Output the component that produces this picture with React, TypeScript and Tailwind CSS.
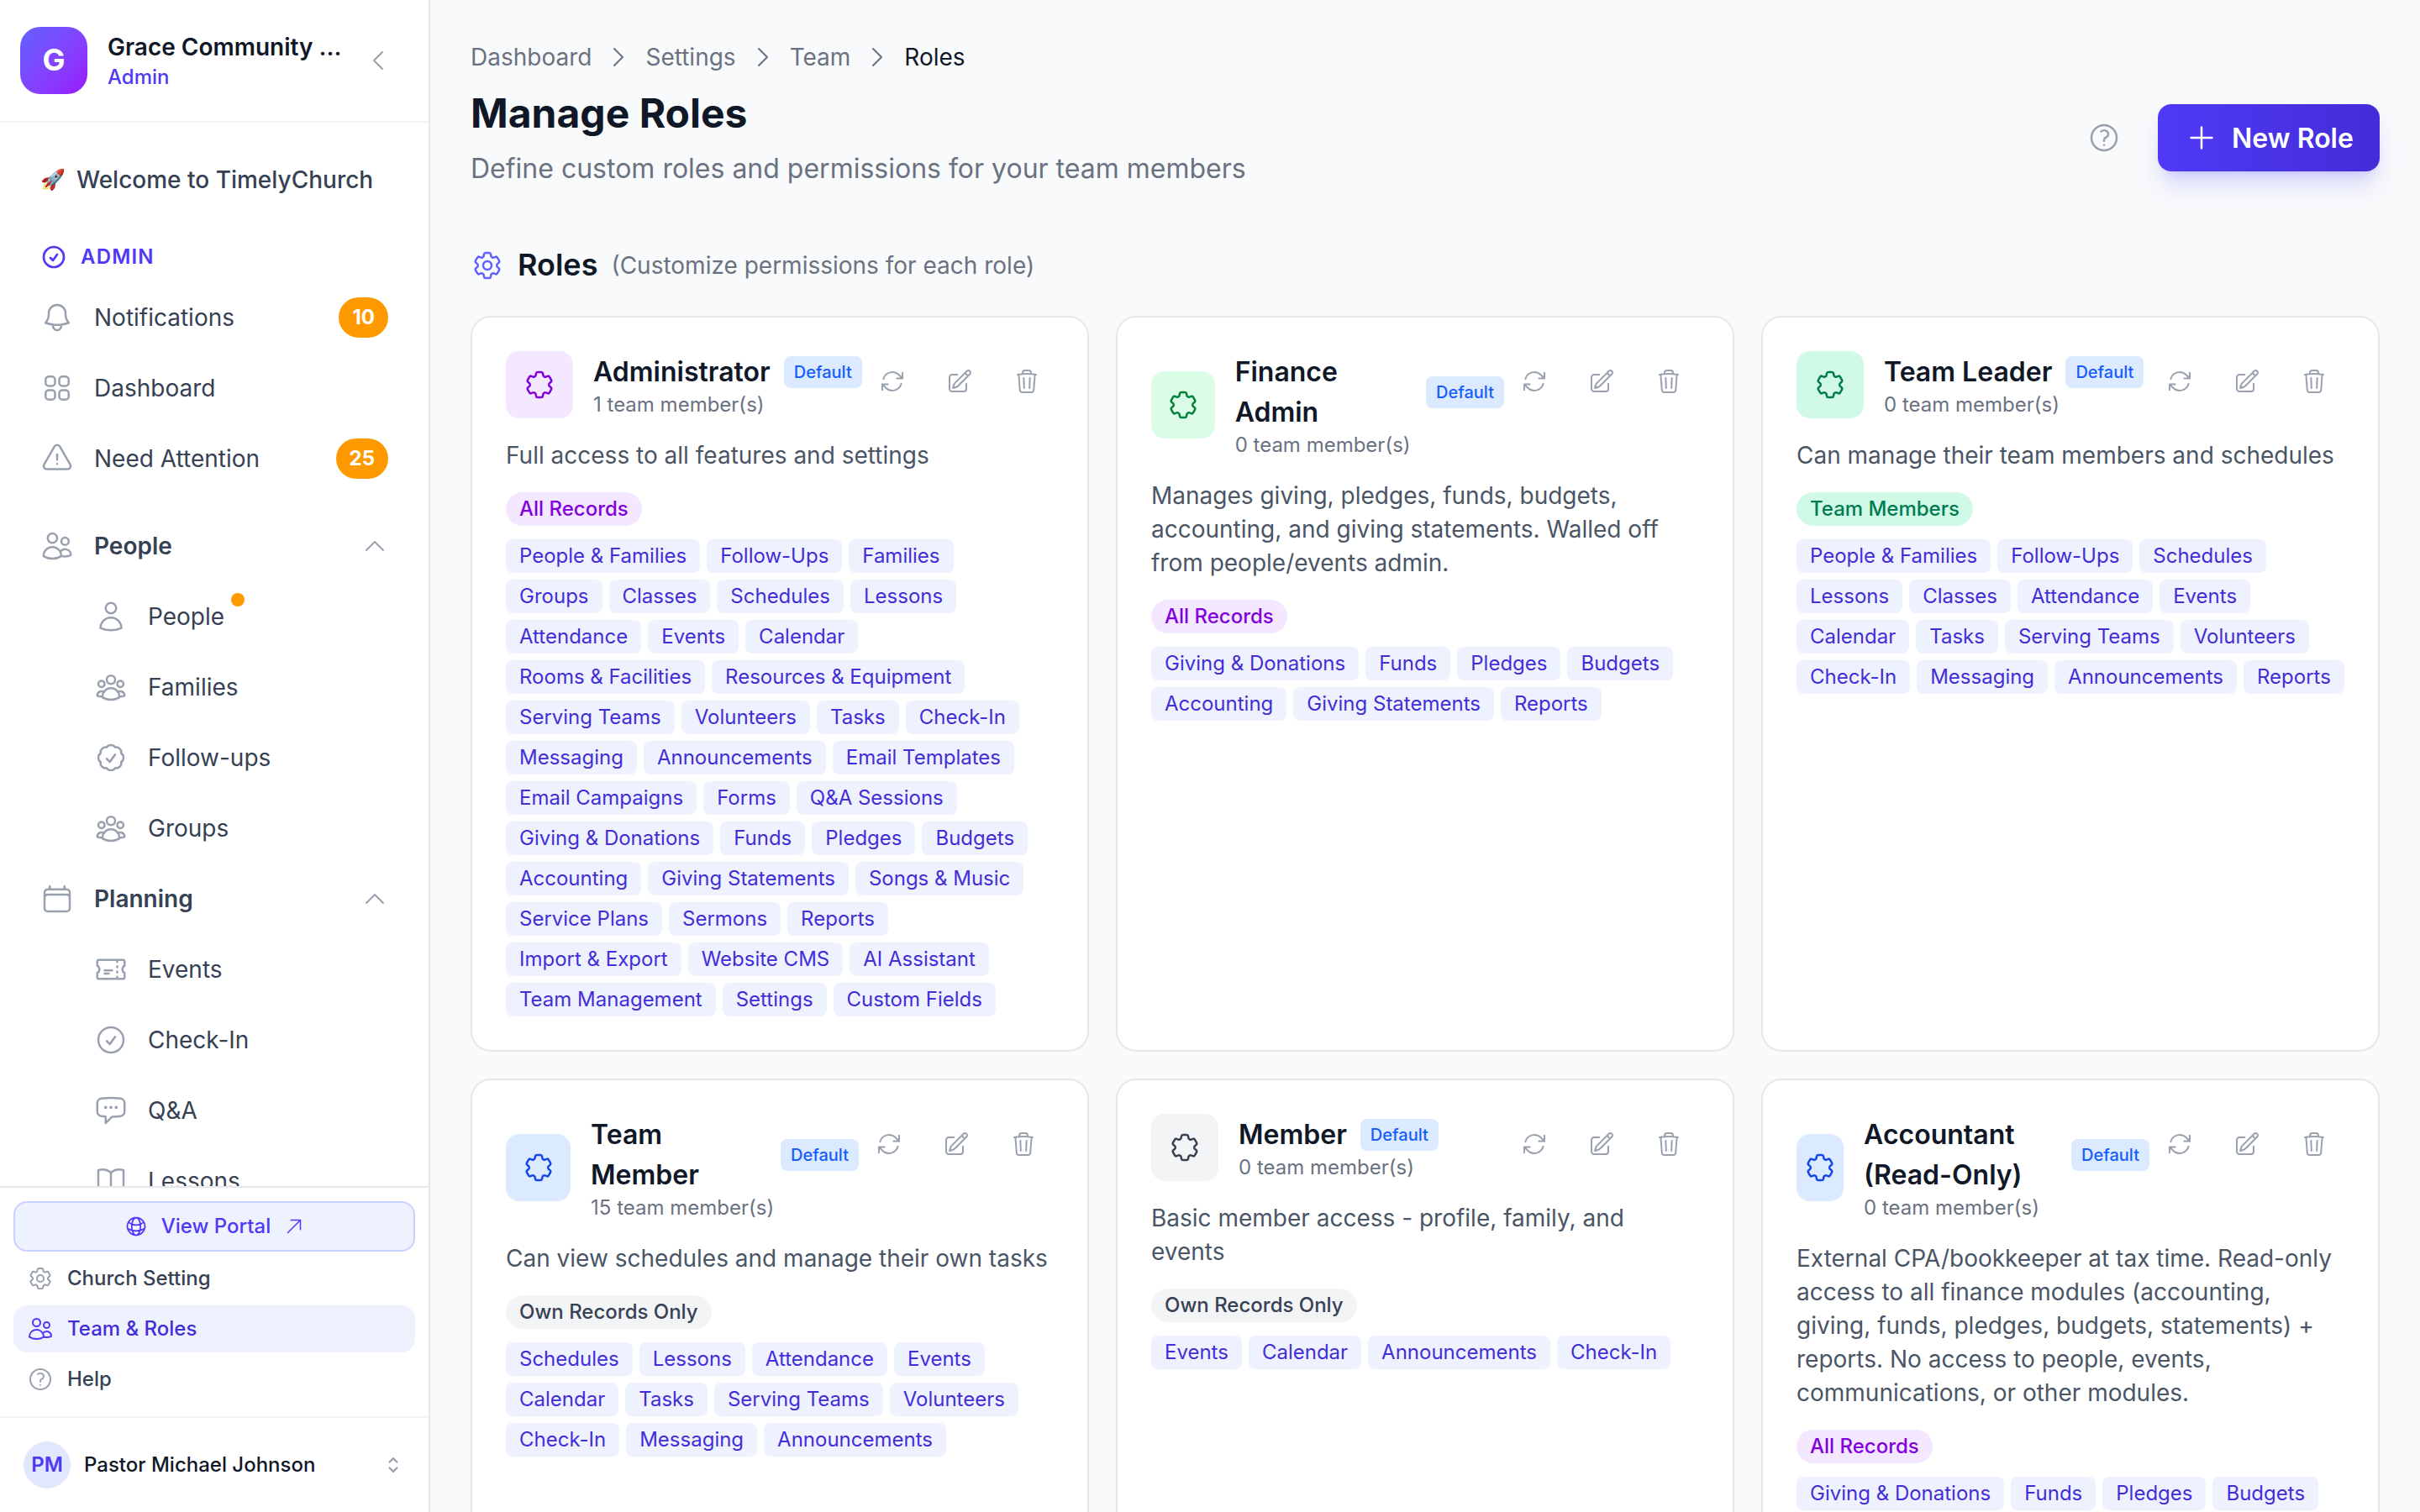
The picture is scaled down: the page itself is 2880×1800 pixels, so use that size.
import React from 'react';
import {
  HiOutlineArrowPath,
  HiOutlineArrowUpRight,
  HiOutlineBell,
  HiOutlineBookOpen,
  HiOutlineCalendar,
  HiOutlineChatBubbleLeftEllipsis,
  HiOutlineCheckBadge,
  HiOutlineCheckCircle,
  HiOutlineChevronLeft,
  HiOutlineChevronRight,
  HiOutlineChevronUp,
  HiOutlineChevronUpDown,
  HiOutlineCog6Tooth,
  HiOutlineExclamationTriangle,
  HiOutlineGlobeAlt,
  HiOutlinePencilSquare,
  HiOutlinePlus,
  HiOutlineQuestionMarkCircle,
  HiOutlineSquares2X2,
  HiOutlineTicket,
  HiOutlineTrash,
  HiOutlineUser,
  HiOutlineUserGroup,
  HiOutlineUsers,
} from 'react-icons/hi2';
import type { IconType } from 'react-icons';

type Role = {
  name: string;
  members: number;
  description: string;
  scope: string;
  scopeClass: string;
  iconClass: string;
  modules: string[];
};

const SCOPE_ALL = 'bg-purple-100 text-purple-700';
const SCOPE_TEAM = 'bg-emerald-100 text-emerald-700';
const SCOPE_OWN = 'bg-gray-100 text-gray-700';

const roles: Role[] = [
  {
    name: 'Administrator',
    members: 1,
    description: 'Full access to all features and settings',
    scope: 'All Records',
    scopeClass: SCOPE_ALL,
    iconClass: 'bg-purple-100 text-purple-700',
    modules: [
      'People & Families', 'Follow-Ups', 'Families', 'Groups', 'Classes', 'Schedules', 'Lessons',
      'Attendance', 'Events', 'Calendar', 'Rooms & Facilities', 'Resources & Equipment',
      'Serving Teams', 'Volunteers', 'Tasks', 'Check-In', 'Messaging', 'Announcements',
      'Email Templates', 'Email Campaigns', 'Forms', 'Q&A Sessions', 'Giving & Donations', 'Funds',
      'Pledges', 'Budgets', 'Accounting', 'Giving Statements', 'Songs & Music', 'Service Plans',
      'Sermons', 'Reports', 'Import & Export', 'Website CMS', 'AI Assistant', 'Team Management',
      'Settings', 'Custom Fields',
    ],
  },
  {
    name: 'Finance Admin',
    members: 0,
    description: 'Manages giving, pledges, funds, budgets, accounting, and giving statements. Walled off from people/events admin.',
    scope: 'All Records',
    scopeClass: SCOPE_ALL,
    iconClass: 'bg-green-100 text-green-700',
    modules: ['Giving & Donations', 'Funds', 'Pledges', 'Budgets', 'Accounting', 'Giving Statements', 'Reports'],
  },
  {
    name: 'Team Leader',
    members: 0,
    description: 'Can manage their team members and schedules',
    scope: 'Team Members',
    scopeClass: SCOPE_TEAM,
    iconClass: 'bg-emerald-100 text-emerald-700',
    modules: [
      'People & Families', 'Follow-Ups', 'Schedules', 'Lessons', 'Classes', 'Attendance', 'Events',
      'Calendar', 'Tasks', 'Serving Teams', 'Volunteers', 'Check-In', 'Messaging', 'Announcements', 'Reports',
    ],
  },
  {
    name: 'Team Member',
    members: 15,
    description: 'Can view schedules and manage their own tasks',
    scope: 'Own Records Only',
    scopeClass: SCOPE_OWN,
    iconClass: 'bg-blue-100 text-blue-700',
    modules: [
      'Schedules', 'Lessons', 'Attendance', 'Events', 'Calendar', 'Tasks', 'Serving Teams',
      'Volunteers', 'Check-In', 'Messaging', 'Announcements',
    ],
  },
  {
    name: 'Member',
    members: 0,
    description: 'Basic member access - profile, family, and events',
    scope: 'Own Records Only',
    scopeClass: SCOPE_OWN,
    iconClass: 'bg-gray-100 text-gray-700',
    modules: ['Events', 'Calendar', 'Announcements', 'Check-In'],
  },
  {
    name: 'Accountant (Read-Only)',
    members: 0,
    description: 'External CPA/bookkeeper at tax time. Read-only access to all finance modules (accounting, giving, funds, pledges, budgets, statements) + reports. No access to people, events, communications, or other modules.',
    scope: 'All Records',
    scopeClass: SCOPE_ALL,
    iconClass: 'bg-blue-100 text-blue-700',
    modules: ['Giving & Donations', 'Funds', 'Pledges', 'Budgets'],
  },
];

// Gear outline without the hub
const RoleIcon = () => (
  <svg className="w-10 h-10 shrink-0" fill="none" viewBox="0 0 24 24" stroke="currentColor" strokeWidth={1.5}>
    <path
      strokeLinecap="round"
      strokeLinejoin="round"
      d="M9.594 3.94c.09-.542.56-.94 1.11-.94h2.593c.55 0 1.02.398 1.11.94l.213 1.281c.063.374.313.686.645.87.074.04.147.083.22.127.325.196.72.257 1.075.124l1.217-.456a1.125 1.125 0 0 1 1.37.49l1.296 2.247a1.125 1.125 0 0 1-.26 1.431l-1.003.827c-.293.241-.438.613-.43.992a7.723 7.723 0 0 1 0 .255c-.008.378.137.75.43.991l1.004.827c.424.35.534.955.26 1.43l-1.298 2.247a1.125 1.125 0 0 1-1.369.491l-1.217-.456c-.355-.133-.75-.072-1.076.124a6.47 6.47 0 0 1-.22.128c-.331.183-.581.495-.644.869l-.213 1.281c-.09.543-.56.94-1.11.94h-2.594c-.55 0-1.019-.398-1.11-.94l-.213-1.281c-.062-.374-.312-.686-.644-.87a6.52 6.52 0 0 1-.22-.127c-.325-.196-.72-.257-1.076-.124l-1.217.456a1.125 1.125 0 0 1-1.369-.49l-1.297-2.247a1.125 1.125 0 0 1 .26-1.431l1.004-.827c.292-.24.437-.613.43-.991a6.932 6.932 0 0 1 0-.255c.007-.38-.138-.751-.43-.992l-1.004-.827a1.125 1.125 0 0 1-.26-1.43l1.297-2.247a1.125 1.125 0 0 1 1.37-.491l1.216.456c.356.133.751.072 1.076-.124.072-.044.146-.086.22-.128.332-.183.582-.495.644-.869l.214-1.28Z"
    />
  </svg>
);

const NavItem = ({ icon: Icon, label, badge }: { icon: IconType; label: string; badge?: string }) => (
  <a className="flex items-center gap-6 h-20 px-12 text-gray-700 shrink-0">
    <Icon className="w-10 h-10 text-gray-400" />
    <span className="flex-1">{label}</span>
    {badge && (
      <span className="px-4 py-2 rounded-full bg-amber-500 text-white text-2xl font-bold leading-8">{badge}</span>
    )}
  </a>
);

const NavGroup = ({ icon: Icon, label }: { icon: IconType; label: string }) => (
  <button className="flex items-center gap-6 h-20 px-12 text-gray-700 font-semibold text-left shrink-0">
    <Icon className="w-10 h-10 text-gray-400" />
    <span className="flex-1">{label}</span>
    <HiOutlineChevronUp className="w-8 h-8 text-gray-400" />
  </button>
);

const NavChild = ({ icon: Icon, label, dot }: { icon: IconType; label: string; dot?: boolean }) => (
  <a className="flex items-center gap-6 h-20 pl-28 text-gray-700 shrink-0">
    <Icon className="w-10 h-10 text-gray-400" />
    <span className="relative">
      {label}
      {dot && <span className="absolute -right-6 -top-2 w-4 h-4 rounded-full bg-amber-500" />}
    </span>
  </a>
);

const Sidebar = () => (
  <aside className="w-[512px] h-full shrink-0 flex flex-col bg-white border-r-2 border-gray-200">
    <div className="flex items-center h-[146px] shrink-0 pl-6 pr-11 border-b-2 border-gray-100">
      <div className="w-20 h-20 pb-0.5 rounded-3xl bg-gradient-to-br from-indigo-500 to-purple-600 flex items-center justify-center text-white text-4xl font-bold">
        G
      </div>
      <div className="ml-6 flex-1">
        <p className="leading-10 font-semibold text-gray-900 whitespace-nowrap">Grace Community ...</p>
        <p className="text-2xl leading-8 font-medium text-indigo-600">Admin</p>
      </div>
      <HiOutlineChevronLeft className="w-8 h-8 text-gray-400" />
    </div>

    <nav className="flex-1 min-h-0 overflow-hidden flex flex-col gap-1 pt-7">
      <a className="flex items-center h-20 px-12 font-medium text-gray-700 shrink-0">
        <span className="w-[43px] text-2xl">🚀</span>
        <span className="whitespace-nowrap">Welcome to TimelyChurch</span>
      </a>
      <div className="flex items-center gap-4 h-8 px-12 mt-8 mb-3 shrink-0 text-indigo-600">
        <HiOutlineCheckCircle className="w-8 h-8 [stroke-width:2]" />
        <span className="text-2xl font-semibold tracking-wider">ADMIN</span>
      </div>
      <NavItem icon={HiOutlineBell} label="Notifications" badge="10" />
      <NavItem icon={HiOutlineSquares2X2} label="Dashboard" />
      <NavItem icon={HiOutlineExclamationTriangle} label="Need Attention" badge="25" />
      <div className="flex flex-col gap-1 mt-5">
        <NavGroup icon={HiOutlineUsers} label="People" />
        <NavChild icon={HiOutlineUser} label="People" dot />
        <NavChild icon={HiOutlineUserGroup} label="Families" />
        <NavChild icon={HiOutlineCheckBadge} label="Follow-ups" />
        <NavChild icon={HiOutlineUserGroup} label="Groups" />
        <NavGroup icon={HiOutlineCalendar} label="Planning" />
        <NavChild icon={HiOutlineTicket} label="Events" />
        <NavChild icon={HiOutlineCheckCircle} label="Check-In" />
        <NavChild icon={HiOutlineChatBubbleLeftEllipsis} label="Q&A" />
        <NavChild icon={HiOutlineBookOpen} label="Lessons" />
      </div>
    </nav>

    <div className="flex flex-col gap-1 p-4 border-t-2 border-gray-200 text-2xl font-medium shrink-0">
      <a className="flex items-center justify-center gap-4 h-15 rounded-2xl border-2 border-indigo-200 bg-indigo-50 text-indigo-600">
        <HiOutlineGlobeAlt className="w-7 h-7" />
        View Portal
        <HiOutlineArrowUpRight className="w-6 h-6" />
      </a>
      <a className="flex items-center gap-4 h-14 px-4 rounded-2xl text-gray-700">
        <HiOutlineCog6Tooth className="w-8 h-8 text-gray-400" />
        Church Setting
      </a>
      <a className="flex items-center gap-4 h-14 px-4 rounded-2xl bg-indigo-50 text-indigo-700">
        <HiOutlineUsers className="w-8 h-8 text-indigo-600" />
        Team &amp; Roles
      </a>
      <a className="flex items-center gap-4 h-14 px-4 rounded-2xl text-gray-700">
        <HiOutlineQuestionMarkCircle className="w-8 h-8 text-gray-400" />
        Help
      </a>
    </div>

    <div className="flex items-center gap-4 h-[114px] shrink-0 px-7 border-t-2 border-gray-100 text-2xl">
      <div className="w-14 h-14 rounded-full bg-indigo-100 text-indigo-600 font-semibold flex items-center justify-center">PM</div>
      <span className="flex-1 font-medium text-gray-900">Pastor Michael Johnson</span>
      <HiOutlineChevronUpDown className="w-7 h-7 text-gray-400 [stroke-width:2]" />
    </div>
  </aside>
);

const RoleCard = ({ role }: { role: Role }) => (
  <div className="bg-white rounded-3xl border-2 border-gray-200 p-10 min-w-0">
    <div className="flex items-start justify-between mb-6">
      <div className="flex items-center gap-6">
        <div className={`w-20 h-20 rounded-2xl flex items-center justify-center ${role.iconClass}`}>
          <RoleIcon />
        </div>
        <div>
          <div className="flex items-center gap-4">
            <h3 className="relative top-px text-[32px] leading-[48px] font-semibold text-gray-900">{role.name}</h3>
            <span className="mt-0.5 px-3 py-1 rounded-lg bg-blue-100 text-blue-600 text-xl leading-[30px] font-medium">Default</span>
          </div>
          <p className="text-2xl leading-8 text-gray-500">{role.members} team member(s)</p>
        </div>
      </div>
      <div className="flex items-center gap-2 text-gray-400">
        {[HiOutlineArrowPath, HiOutlinePencilSquare, HiOutlineTrash].map((Icon, i) => (
          <button key={i} className="min-w-[72px] min-h-[72px] flex items-center justify-center">
            <Icon className="w-8 h-8" />
          </button>
        ))}
      </div>
    </div>
    <p className="text-gray-600 leading-10 mb-6">{role.description}</p>
    <div className="flex mb-4">
      <span className={`px-4 py-1 rounded-full text-2xl leading-8 font-medium ${role.scopeClass}`}>{role.scope}</span>
    </div>
    <div className="flex flex-wrap gap-2">
      {role.modules.map((m) => (
        <span key={m} className="px-4 py-1 rounded-lg bg-indigo-50 text-indigo-700 text-2xl leading-8">{m}</span>
      ))}
    </div>
  </div>
);

export default function App() {
  return (
    <div className="flex w-[2880px] h-[1800px] overflow-hidden bg-gray-50 text-[28px] leading-10 antialiased font-['Inter',sans-serif]">
      <Sidebar />
      <main className="flex-1 min-w-0 px-12 pt-12 overflow-hidden">
        <nav className="flex items-center gap-4 mb-4 text-gray-500">
          {['Dashboard', 'Settings', 'Team'].map((crumb) => (
            <React.Fragment key={crumb}>
              <span>{crumb}</span>
              <HiOutlineChevronRight className="w-8 h-8" />
            </React.Fragment>
          ))}
          <span className="text-gray-900">Roles</span>
        </nav>

        {/* Page header */}
        <header className="flex items-center justify-between mb-16">
          <div>
            <h1 className="text-5xl leading-[62px] font-bold text-gray-900">Manage Roles</h1>
            <p className="mt-3 text-[32px] leading-[46px] text-gray-500">Define custom roles and permissions for your team members</p>
          </div>
          <div className="flex items-center gap-11">
            <HiOutlineQuestionMarkCircle className="w-10 h-10 text-gray-400" />
            <button className="flex items-center gap-4 w-[264px] h-20 pl-8 rounded-2xl bg-gradient-to-r from-indigo-600 to-indigo-700 text-white text-[32px] font-semibold shadow-[0_20px_30px_-6px_rgba(97,95,255,0.25),0_8px_12px_-8px_rgba(97,95,255,0.25)]">
              <HiOutlinePlus className="w-10 h-10" />
              <span className="pt-0.5 whitespace-nowrap">New Role</span>
            </button>
          </div>
        </header>

        <section>
          <div className="flex items-center gap-4 h-14 mb-8">
            <HiOutlineCog6Tooth className="w-10 h-10 text-indigo-500" />
            <h2 className="pb-0.5 text-4xl font-semibold text-gray-900">Roles</h2>
            <span className="text-gray-500">(Customize permissions for each role)</span>
          </div>
          <div className="grid grid-cols-3 gap-8">
            {roles.map((role) => (
              <RoleCard key={role.name} role={role} />
            ))}
          </div>
        </section>
      </main>
    </div>
  );
}
